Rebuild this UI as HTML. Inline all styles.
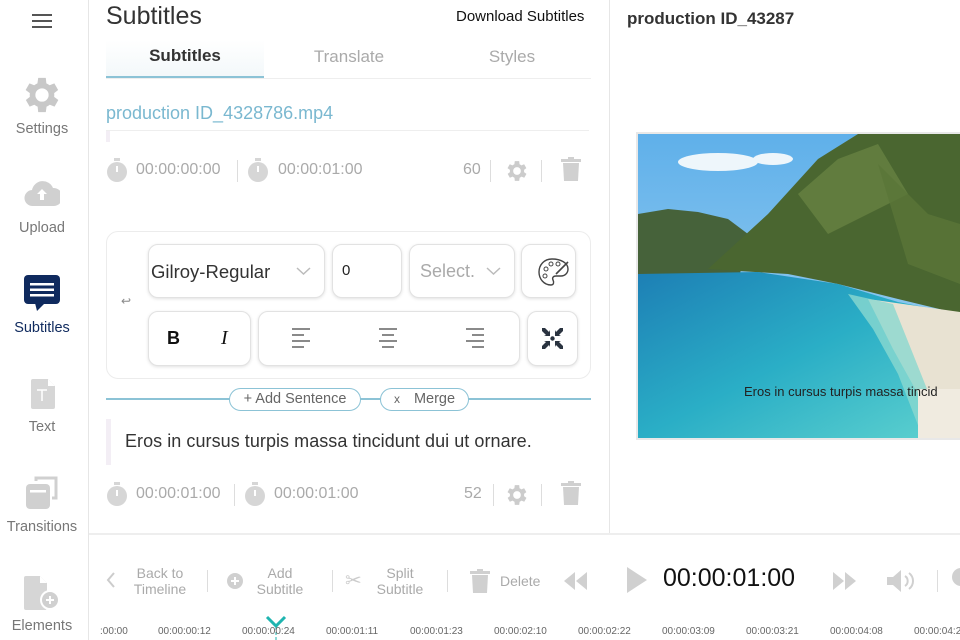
<!DOCTYPE html>
<html><head><meta charset="utf-8"><style>
*{margin:0;padding:0;box-sizing:border-box}
body{width:960px;height:640px;overflow:hidden;background:#fff;font-family:"Liberation Sans",sans-serif;position:relative;color:#333}
.a{position:absolute}
.side{left:0;top:0;width:89px;height:640px;border-right:1px solid #e6e6e6}
.nav{position:absolute;left:0;width:84px;text-align:center;font-size:14.5px;color:#777}
.box{position:absolute;border:1px solid #e2e2e2;border-radius:10px;box-shadow:0 1px 3px rgba(0,0,0,.12);background:#fff}
.pill{position:absolute;border:1.5px solid #8cc3d6;border-radius:12px;background:#fff;font-size:14px;color:#666;text-align:center;line-height:20px;height:23px}
.tl{position:absolute;top:626px;font-size:10px;color:#666}
</style></head><body>
<div class="a side"></div>
<div class="a" style="left:32px;top:14px;width:20px;height:2px;background:#555;box-shadow:0 6px 0 #555,0 12px 0 #555"></div>
<svg class="a" style="left:23px;top:76px" width="38" height="38" viewBox="3 2 20 20"><path fill="#c8c8c8" d="M19.4 13a7.5 7.5 0 000-2l2.1-1.6-2-3.5-2.5 1a7 7 0 00-1.7-1L15 3h-4l-.4 2.9a7 7 0 00-1.7 1l-2.5-1-2 3.5L6.6 11a7.5 7.5 0 000 2l-2.1 1.6 2 3.5 2.5-1a7 7 0 001.7 1L11 21h4l.4-2.9a7 7 0 001.7-1l2.5 1 2-3.5zM13 15.5a3.5 3.5 0 110-7 3.5 3.5 0 010 7z"/></svg>
<div class="nav" style="top:121px">Settings</div>
<svg class="a" style="left:24px;top:180px" width="36" height="28" viewBox="0 0 36 28"><path fill="#d0d0d0" d="M9 26a8 8 0 01-1-16 11 11 0 0121-2 8 8 0 011 18z"/><path fill="#fff" d="M18 9l-5 5h3v6h4v-6h3z"/></svg>
<div class="nav" style="top:220px">Upload</div>
<svg class="a" style="left:23px;top:275px" width="38" height="38" viewBox="0 0 38 38"><rect x="1" y="0" width="36" height="29" rx="4" fill="#0f2a5e"/><path fill="#0f2a5e" d="M12 28h10l-8 8z"/><rect x="7" y="8" width="24" height="2.5" fill="#fff"/><rect x="7" y="13.5" width="24" height="2.5" fill="#fff"/><rect x="7" y="19" width="24" height="2.5" fill="#fff"/></svg>
<div class="nav" style="top:320px;color:#0f2a5e">Subtitles</div>
<svg class="a" style="left:31px;top:379px" width="24" height="30" viewBox="0 0 24 30"><path fill="#d6d6d6" d="M2 0h15l7 7v21a2 2 0 01-2 2H2a2 2 0 01-2-2V2a2 2 0 012-2z"/><path fill="#fff" d="M17 0v7h7z"/><path stroke="#fff" stroke-width="1.5" fill="none" d="M6 11h10M11 11v11"/></svg>
<div class="nav" style="top:419px">Text</div>
<svg class="a" style="left:24px;top:475px" width="36" height="36" viewBox="0 0 36 36"><path fill="none" stroke="#d0d0d0" stroke-width="3" d="M12 6V3h20v20h-4"/><rect x="2" y="9" width="24" height="25" rx="4" fill="#d0d0d0"/><rect x="6" y="15" width="16" height="2.5" fill="#fff"/></svg>
<div class="nav" style="top:519px">Transitions</div>
<svg class="a" style="left:24px;top:576px" width="38" height="36" viewBox="0 0 38 36"><path fill="#d6d6d6" d="M2 0h14l7 7v25a2 2 0 01-2 2H2a2 2 0 01-2-2V2a2 2 0 012-2z"/><path fill="#fff" d="M16 0v7h7z"/><circle cx="26" cy="24" r="10" fill="#fff"/><circle cx="26" cy="24" r="8" fill="#d0d0d0"/><path stroke="#fff" stroke-width="2" d="M22 24h8M26 20v8"/></svg>
<div class="nav" style="top:618px">Elements</div>

<div class="a" style="left:609px;top:0;width:1px;height:533px;background:#e6e6e6"></div>
<div class="a" style="left:106px;top:2px;font-size:25px;color:#333">Subtitles</div>
<div class="a" style="left:456px;top:8px;font-size:15px;color:#111">Download Subtitles</div>
<div class="a" style="left:106px;top:40px;width:158px;height:38px;background:linear-gradient(#fff,#f3f8fa);border-bottom:2px solid #8cc3d6"></div>
<div class="a" style="left:106px;top:78px;width:485px;height:1px;background:#eee"></div>
<div class="a" style="left:106px;top:46px;width:158px;text-align:center;font-size:17px;font-weight:bold;color:#333">Subtitles</div>
<div class="a" style="left:270px;top:47px;width:158px;text-align:center;font-size:17px;color:#aaa">Translate</div>
<div class="a" style="left:433px;top:47px;width:158px;text-align:center;font-size:17px;color:#aaa">Styles</div>
<div class="a" style="left:106px;top:103px;font-size:18px;color:#7ab8d0">production ID_4328786.mp4</div>
<div class="a" style="left:106px;top:130px;width:483px;height:1px;background:#eee"></div>
<div class="a" style="left:106px;top:131px;width:4px;height:11px;background:#f3eef5"></div>

<svg class="a" style="left:106px;top:158px" width="22" height="25" viewBox="0 0 22 25"><rect x="8" y="0" width="6" height="3" fill="#d6d6d6"/><circle cx="11" cy="14" r="10" fill="#d6d6d6"/><path stroke="#fff" stroke-width="2" d="M11 14V8"/></svg>
<div class="a" style="left:136px;top:161px;font-size:16px;color:#aaa">00:00:00:00</div>
<div class="a" style="left:237px;top:160px;width:1px;height:22px;background:#ddd"></div>
<svg class="a" style="left:247px;top:158px" width="22" height="25" viewBox="0 0 22 25"><rect x="8" y="0" width="6" height="3" fill="#d6d6d6"/><circle cx="11" cy="14" r="10" fill="#d6d6d6"/><path stroke="#fff" stroke-width="2" d="M11 14V8"/></svg>
<div class="a" style="left:278px;top:161px;font-size:16px;color:#aaa">00:00:01:00</div>
<div class="a" style="left:463px;top:161px;font-size:16px;color:#aaa">60</div>
<div class="a" style="left:490px;top:160px;width:1px;height:22px;background:#ddd"></div>
<svg class="a" style="left:506px;top:160px" width="22" height="22" viewBox="3 2 20 20"><path fill="#ccc" d="M19.4 13a7.5 7.5 0 000-2l2.1-1.6-2-3.5-2.5 1a7 7 0 00-1.7-1L15 3h-4l-.4 2.9a7 7 0 00-1.7 1l-2.5-1-2 3.5L6.6 11a7.5 7.5 0 000 2l-2.1 1.6 2 3.5 2.5-1a7 7 0 001.7 1L11 21h4l.4-2.9a7 7 0 001.7-1l2.5 1 2-3.5zM13 15.5a3.5 3.5 0 110-7 3.5 3.5 0 010 7z"/></svg>
<div class="a" style="left:541px;top:160px;width:1px;height:22px;background:#ddd"></div>
<svg class="a" style="left:561px;top:157px" width="20" height="24" viewBox="0 0 20 24"><rect x="0" y="2" width="20" height="3" fill="#d0d0d0"/><rect x="7" y="0" width="6" height="3" fill="#d0d0d0"/><path fill="#d0d0d0" d="M2 6h16l-1 18H3z"/></svg>

<div class="a" style="left:106px;top:231px;width:485px;height:148px;border:1px solid #ececec;border-radius:12px"></div>
<div class="a" style="left:121px;top:294px;font-size:12px;color:#888">↩</div>
<div class="box" style="left:148px;top:244px;width:177px;height:54px"></div>
<div class="a" style="left:151px;top:261px;font-size:18.5px;color:#333">Gilroy-Regular</div>
<svg class="a" style="left:296px;top:267px" width="15" height="9"><path d="M1 1l6.5 6 6.5-6" stroke="#bbb" stroke-width="1.5" fill="none"/></svg>
<div class="box" style="left:332px;top:244px;width:70px;height:54px"></div>
<div class="a" style="left:342px;top:262px;font-size:15px;color:#222">0</div>
<div class="box" style="left:409px;top:244px;width:106px;height:54px"></div>
<div class="a" style="left:420px;top:261px;font-size:18px;color:#aaa">Select.</div>
<svg class="a" style="left:486px;top:267px" width="15" height="9"><path d="M1 1l6.5 6 6.5-6" stroke="#bbb" stroke-width="1.5" fill="none"/></svg>
<div class="box" style="left:521px;top:244px;width:55px;height:54px"></div>
<svg class="a" style="left:538px;top:257px" width="32" height="30" viewBox="0 0 32 30"><path d="M14 2C6 2 1 8 1 15s5 13 12 13c3 0 3-3 2-5s0-4 3-4h5c4 0 7-3 7-7C30 6 23 2 14 2z" fill="none" stroke="#444" stroke-width="1.4"/><circle cx="8" cy="12" r="2" fill="none" stroke="#444"/><circle cx="13" cy="7" r="2" fill="none" stroke="#444"/><circle cx="20" cy="7" r="2" fill="none" stroke="#444"/><circle cx="7" cy="19" r="2" fill="none" stroke="#444"/><path d="M30 5l-12 12" stroke="#444" stroke-width="1.6"/></svg>
<div class="box" style="left:148px;top:311px;width:103px;height:55px"></div>
<div class="a" style="left:167px;top:328px;font-size:18px;font-weight:bold;color:#111">B</div>
<div class="a" style="left:221px;top:327px;font-size:20px;font-style:italic;font-family:'Liberation Serif',serif;color:#111">I</div>
<div class="box" style="left:258px;top:311px;width:262px;height:55px"></div>
<svg class="a" style="left:291px;top:328px" width="210" height="20"><g stroke="#444" stroke-width="1.3"><path d="M1 1h18M1 7h12M1 13h18M1 19h12"/><path d="M88 1h18M91 7h12M88 13h18M91 19h12"/><path d="M175 1h18M181 7h12M175 13h18M181 19h12"/></g></svg>
<div class="box" style="left:527px;top:311px;width:51px;height:55px"></div>
<svg class="a" style="left:541px;top:327px" width="23" height="23" viewBox="0 0 23 23"><g fill="#2a3340"><circle cx="11.5" cy="11.5" r="2.2"/><path d="M1 1l3 0 4 4 1-2 0 6-6 0 2-1-4-4z"/><path d="M22 1l-3 0-4 4-1-2 0 6 6 0-2-1 4-4z"/><path d="M1 22l3 0 4-4 1 2 0-6-6 0 2 1-4 4z"/><path d="M22 22l-3 0-4-4-1 2 0-6 6 0-2 1 4 4z"/></g></svg>

<div class="a" style="left:106px;top:398px;width:485px;height:1.5px;background:#8cc3d6"></div>
<div class="pill" style="left:229px;top:388px;width:132px;font-size:14.5px">+ Add Sentence</div>
<div class="pill" style="left:380px;top:388px;width:89px;font-size:14.5px"><span style="font-size:12px;margin-right:14px">x</span>Merge</div>
<div class="a" style="left:106px;top:419px;width:5px;height:46px;background:#f3eef5"></div>
<div class="a" style="left:125px;top:431px;font-size:18px;color:#333;letter-spacing:.05px">Eros in cursus turpis massa tincidunt dui ut ornare.</div>

<svg class="a" style="left:106px;top:482px" width="22" height="25" viewBox="0 0 22 25"><rect x="8" y="0" width="6" height="3" fill="#d6d6d6"/><circle cx="11" cy="14" r="10" fill="#d6d6d6"/><path stroke="#fff" stroke-width="2" d="M11 14V8"/></svg>
<div class="a" style="left:136px;top:485px;font-size:16px;color:#aaa">00:00:01:00</div>
<div class="a" style="left:234px;top:484px;width:1px;height:22px;background:#ddd"></div>
<svg class="a" style="left:244px;top:482px" width="22" height="25" viewBox="0 0 22 25"><rect x="8" y="0" width="6" height="3" fill="#d6d6d6"/><circle cx="11" cy="14" r="10" fill="#d6d6d6"/><path stroke="#fff" stroke-width="2" d="M11 14V8"/></svg>
<div class="a" style="left:274px;top:485px;font-size:16px;color:#aaa">00:00:01:00</div>
<div class="a" style="left:464px;top:485px;font-size:16px;color:#aaa">52</div>
<div class="a" style="left:493px;top:484px;width:1px;height:22px;background:#ddd"></div>
<svg class="a" style="left:506px;top:484px" width="22" height="22" viewBox="3 2 20 20"><path fill="#ccc" d="M19.4 13a7.5 7.5 0 000-2l2.1-1.6-2-3.5-2.5 1a7 7 0 00-1.7-1L15 3h-4l-.4 2.9a7 7 0 00-1.7 1l-2.5-1-2 3.5L6.6 11a7.5 7.5 0 000 2l-2.1 1.6 2 3.5 2.5-1a7 7 0 001.7 1L11 21h4l.4-2.9a7 7 0 001.7-1l2.5 1 2-3.5zM13 15.5a3.5 3.5 0 110-7 3.5 3.5 0 010 7z"/></svg>
<div class="a" style="left:541px;top:484px;width:1px;height:22px;background:#ddd"></div>
<svg class="a" style="left:561px;top:481px" width="20" height="24" viewBox="0 0 20 24"><rect x="0" y="2" width="20" height="3" fill="#d0d0d0"/><rect x="7" y="0" width="6" height="3" fill="#d0d0d0"/><path fill="#d0d0d0" d="M2 6h16l-1 18H3z"/></svg>

<div class="a" style="left:627px;top:9px;font-size:17px;font-weight:bold;color:#333">production ID_43287</div>
<div class="a" style="left:636px;top:132px;width:330px;height:308px;border:2px solid #e8e8e8;background:#fff"></div>
<svg class="a" style="left:638px;top:134px" width="322" height="304" viewBox="0 0 322 304">
<defs><linearGradient id="sky" x1="0" y1="0" x2="0" y2="1"><stop offset="0" stop-color="#5fb0ea"/><stop offset="1" stop-color="#a9d6f2"/></linearGradient>
<linearGradient id="sea" x1="0" y1="0" x2="1" y2="1"><stop offset="0" stop-color="#1d7fb5"/><stop offset=".5" stop-color="#2aaec6"/><stop offset="1" stop-color="#5fd2cf"/></linearGradient></defs>
<rect width="322" height="304" fill="url(#sky)"/>
<ellipse cx="80" cy="28" rx="40" ry="9" fill="#eef6fb"/>
<ellipse cx="135" cy="25" rx="20" ry="6" fill="#eef6fb"/>
<path d="M0 80 L30 75 60 78 90 85 110 100 100 150 0 150z" fill="#46623a"/>
<path d="M70 135 L130 80 180 25 220 0 322 0 322 180 260 165 200 150 150 140z" fill="#4a6630"/>
<path d="M160 60 L200 25 240 10 270 60 230 80 190 100z" fill="#6b8645" opacity=".7"/>
<path d="M240 30 L290 80 322 90 322 150 270 130z" fill="#5a7638" opacity=".8"/>
<path d="M0 140 L120 138 200 150 260 168 322 180 322 304 0 304z" fill="url(#sea)"/>
<path d="M230 165 L322 178 322 304 300 304 280 260 255 215z" fill="#e8e2d2"/>
<path d="M210 160 L255 170 275 220 295 270 300 304 285 304 260 240 235 195z" fill="#8ad8d0" opacity=".8"/>
<rect x="280" y="255" width="42" height="49" fill="#f0ebe0"/>
</svg>
<div class="a" style="left:744px;top:384px;font-size:13px;color:#222;white-space:nowrap">Eros in cursus turpis massa tincid</div>

<div class="a" style="left:89px;top:533px;width:871px;height:2px;background:#eee"></div>
<svg class="a" style="left:106px;top:572px" width="10" height="16"><path d="M8 1L2 8l6 7" stroke="#ccc" stroke-width="2" fill="none"/></svg>
<div class="a" style="left:125px;top:565px;width:70px;text-align:center;font-size:14px;line-height:16px;color:#aaa">Back to<br>Timeline</div>
<div class="a" style="left:207px;top:570px;width:1px;height:22px;background:#ddd"></div>
<svg class="a" style="left:226px;top:572px" width="18" height="18"><circle cx="9" cy="9" r="8" fill="#d0d0d0"/><path d="M5 9h8M9 5v8" stroke="#fff" stroke-width="2"/></svg>
<div class="a" style="left:250px;top:565px;width:60px;text-align:center;font-size:14px;line-height:16px;color:#aaa">Add<br>Subtitle</div>
<div class="a" style="left:332px;top:570px;width:1px;height:22px;background:#ddd"></div>
<div class="a" style="left:345px;top:568px;font-size:20px;color:#ccc">✂</div>
<div class="a" style="left:370px;top:565px;width:60px;text-align:center;font-size:14px;line-height:16px;color:#aaa">Split<br>Subtitle</div>
<div class="a" style="left:447px;top:570px;width:1px;height:22px;background:#ddd"></div>
<svg class="a" style="left:470px;top:568px" width="20" height="26" viewBox="0 0 20 24"><rect x="0" y="2" width="20" height="3" fill="#d0d0d0"/><rect x="7" y="0" width="6" height="3" fill="#d0d0d0"/><path fill="#d0d0d0" d="M2 6h16l-1 18H3z"/></svg>
<div class="a" style="left:500px;top:573px;font-size:14px;color:#aaa">Delete</div>
<svg class="a" style="left:562px;top:571px" width="26" height="20"><path d="M13 1L2 10l11 9zM25 1L14 10l11 9z" fill="#d0d0d0"/></svg>
<svg class="a" style="left:626px;top:566px" width="22" height="28"><path d="M1 1l20 13L1 27z" fill="#d0d0d0"/></svg>
<div class="a" style="left:663px;top:564px;font-size:25px;color:#111">00:00:01:00</div>
<svg class="a" style="left:832px;top:571px" width="26" height="20"><path d="M1 1l11 9-11 9zM13 1l11 9-11 9z" fill="#d0d0d0"/></svg>
<svg class="a" style="left:886px;top:569px" width="32" height="24"><path d="M1 8h6l8-7v22l-8-7H1z" fill="#d0d0d0"/><path d="M19 7a6 6 0 010 10M23 4a10 10 0 010 16" stroke="#d0d0d0" stroke-width="2" fill="none"/></svg>
<div class="a" style="left:937px;top:570px;width:1px;height:22px;background:#ddd"></div>
<div class="a" style="left:952px;top:568px;width:18px;height:18px;border-radius:50%;background:#d0d0d0"></div>

<svg class="a" style="left:264px;top:615px" width="24" height="25"><path d="M3 2l9 9 9-9" stroke="#1fb5b0" stroke-width="3" fill="none"/><path d="M12 12v13" stroke="#1fb5b0" stroke-width="1" stroke-dasharray="3 2"/></svg>
<div class="tl" style="left:100px">:00:00</div>
<div class="tl" style="left:158px">00:00:00:12</div>
<div class="tl" style="left:242px">00:00:00:24</div>
<div class="tl" style="left:326px">00:00:01:11</div>
<div class="tl" style="left:410px">00:00:01:23</div>
<div class="tl" style="left:494px">00:00:02:10</div>
<div class="tl" style="left:578px">00:00:02:22</div>
<div class="tl" style="left:662px">00:00:03:09</div>
<div class="tl" style="left:746px">00:00:03:21</div>
<div class="tl" style="left:830px">00:00:04:08</div>
<div class="tl" style="left:914px">00:00:04:2</div>
</body></html>
